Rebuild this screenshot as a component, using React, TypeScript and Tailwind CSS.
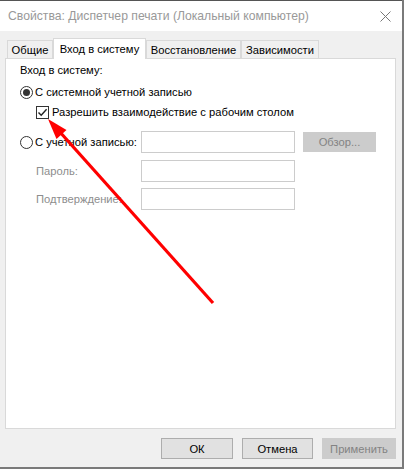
import React from 'react';

const font = { fontFamily: '"Liberation Sans", Arial, sans-serif' };

const Radio: React.FC<{ checked?: boolean }> = ({ checked }) => (
  <span className="w-[13px] h-[13px] rounded-full border border-[#333333] bg-white flex items-center justify-center shrink-0">
    {checked && <span className="w-[7px] h-[7px] rounded-full bg-[#333333]" />}
  </span>
);

const Checkbox: React.FC = () => (
  <span className="w-[13px] h-[13px] border border-[#333333] bg-white flex items-center justify-center shrink-0">
    <svg width="11" height="11" viewBox="0 0 11 11">
      <path d="M1.5 5.5 L4.2 8.3 L9.6 2.2" fill="none" stroke="#222222" strokeWidth="1.4" />
    </svg>
  </span>
);

const Input: React.FC = () => (
  <div className="w-[154px] h-[22px] bg-white border border-[#cccccc] shrink-0" />
);

const Tab: React.FC<{ label: string; active?: boolean; w: string }> = ({ label, active, w }) => (
  <div
    className={
      active
        ? `${w} h-[21px] bg-white border border-b-0 border-[#d9d9d9] -mb-px flex items-center justify-center relative z-10 text-black`
        : `${w} h-[18px] bg-[#f0f0f0] border border-b-0 border-[#d9d9d9] flex items-center justify-center text-black`
    }
  >
    {label}
  </div>
);

const Button: React.FC<{ label: string; w: string; disabled?: boolean }> = ({ label, w, disabled }) => (
  <div
    className={
      disabled
        ? `${w} h-[21px] bg-[#cccccc] border border-[#cccccc] text-[#838383] flex items-center justify-center`
        : `${w} h-[21px] bg-[#e1e1e1] border border-[#adadad] text-black flex items-center justify-center`
    }
  >
    {label}
  </div>
);

export default function App() {
  return (
    <div className="w-[404px] h-[469px] bg-[#7a7a7a] relative overflow-hidden text-[11.2px] leading-[16px] whitespace-nowrap" style={font}>
      <div className="w-[402px] h-[467px] bg-[#f0f0f0] flex flex-col border-t border-[#555555]">
        {/* title bar */}
        <div className="h-[30px] bg-white flex items-center justify-between pl-[8px] pr-[11px]">
          <span className="text-[12.2px] text-[#999999]">Свойства: Диспетчер печати (Локальный компьютер)</span>
          <svg width="11" height="11" viewBox="0 0 11 11">
            <path d="M0.5 0.5 L10.5 10.5 M10.5 0.5 L0.5 10.5" stroke="#777777" strokeWidth="1" />
          </svg>
        </div>

        {/* tabs */}
        <div className="flex items-end pl-[7px] mt-[7px]">
          <Tab label="Общие" w="w-[46px]" />
          <Tab label="Вход в систему" w="w-[93px]" active />
          <Tab label="Восстановление" w="w-[95px]" />
          <Tab label="Зависимости" w="w-[78px]" />
        </div>

        {/* panel */}
        <div className="ml-[5px] w-[391px] h-[371px] bg-white border border-[#d9d9d9] pl-[14px] pt-[3px] text-black">
          <div>Вход в систему:</div>

          <div className="flex items-center gap-[2px] mt-[6px]">
            <Radio checked />
            <span>С системной учетной записью</span>
          </div>

          <div className="flex items-center gap-[3px] mt-[4px] ml-[16px]">
            <Checkbox />
            <span>Разрешить взаимодействие с рабочим столом</span>
          </div>

          <div className="flex items-center mt-[11px]">
            <div className="w-[121px] shrink-0 flex items-center gap-[2px]">
              <Radio />
              <span>С учетной записью:</span>
            </div>
            <Input />
            <div className="ml-[8px] w-[73px] h-[20px] bg-[#cccccc] text-[#838383] flex items-center justify-center">
              Обзор...
            </div>
          </div>

          <div className="flex items-center mt-[7px]">
            <div className="w-[121px] shrink-0 pl-[16px] text-[#8d8d8d]">Пароль:</div>
            <Input />
          </div>

          <div className="flex items-center mt-[6px]">
            <div className="w-[121px] shrink-0 pl-[16px] text-[#8d8d8d]">Подтверждение:</div>
            <Input />
          </div>
        </div>

        {/* buttons */}
        <div className="flex justify-end gap-[9px] mt-[9px] pr-[6px]">
          <Button label="ОК" w="w-[72px]" />
          <Button label="Отмена" w="w-[71px]" />
          <Button label="Применить" w="w-[74px]" disabled />
        </div>
      </div>

      {/* red annotation arrow */}
      <svg className="absolute left-0 top-0 pointer-events-none" width="404" height="469" viewBox="0 0 404 469">
        <line x1="213" y1="303" x2="59" y2="131" stroke="#ff0000" strokeWidth="3.2" />
        <polygon points="48,119 56.5,139 66.5,130" fill="#ff0000" />
      </svg>
    </div>
  );
}
